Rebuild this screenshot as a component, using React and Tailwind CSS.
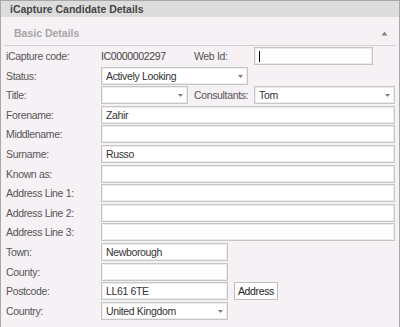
import React from 'react';

const Arrow = () => (
    <svg width="5" height="3" viewBox="0 0 5 3" className="absolute right-[4px] top-[7px]">
        <path d="M0 0H5L2.5 3Z" fill="#7d7d7d" />
    </svg>
);

const Field = ({ width = 'flex-1', value, dropdown, children }) => (
    <div className={`relative h-[18px] shrink-0 bg-white border border-[#c6c6c6] shadow-[inset_0_0_0_1px_#ececec] pl-[4px] leading-[16px] text-[#333] whitespace-nowrap ${width}`}>
        {value}
        {children}
        {dropdown && <Arrow />}
    </div>
);

const Label = ({ children, width = 'w-[95px]' }) => (
    <div className={`shrink-0 text-[#555] ${width}`}>{children}</div>
);

const rows = [
    { label: 'Middlename:' },
    { label: 'Surname:', value: 'Russo' },
    { label: 'Known as:' },
    { label: 'Address Line 1:' },
    { label: 'Address Line 2:' },
    { label: 'Address Line 3:' },
];

const App = () => {
    return (
        <div className="w-[400px] h-[327px] overflow-hidden bg-[#f5f1f5] border border-b-0 border-[#a8a8a8] font-[Liberation_Sans,Arial,sans-serif] text-[10.5px] tracking-[-0.35px]">
            {/* Title bar */}
            <div className="h-[16px] bg-[#dcdcdc] pl-[9px] font-bold tracking-normal leading-[16px] text-[#464646]">
                iCapture Candidate Details
            </div>

            {/* Group header */}
            <div className="mx-[3px] h-[29px] border-b border-[#d4d0d4] flex items-start justify-between pt-[9px] pl-[10px] pr-[8px]">
                <span className="font-bold tracking-normal text-[#a6a6a6] leading-[14px]">Basic Details</span>
                <svg width="7" height="5" viewBox="0 0 7 5" className="mt-[5px]">
                    <path d="M0.5 4.5H6.5L3.5 0.5Z" fill="#858585" />
                </svg>
            </div>

            {/* Form */}
            <div className="pl-[5px] pr-[4px] pt-[1px] flex flex-col gap-[1.6px] leading-[18px]">
                <div className="flex items-center h-[18px]">
                    <Label>iCapture code:</Label>
                    <div className="w-[93px] shrink-0 text-[#444]">IC0000002297</div>
                    <Label width="w-[60px]">Web Id:</Label>
                    <Field width="w-[119px]">
                        <span className="absolute left-[4px] top-[3px] w-px h-[11px] bg-black" />
                    </Field>
                </div>
                <div className="flex items-center h-[18px]">
                    <Label>Status:</Label>
                    <Field width="w-[147px]" value="Actively Looking" dropdown />
                </div>
                <div className="flex items-center h-[18px]">
                    <Label>Title:</Label>
                    <Field width="w-[87px]" dropdown />
                    <div className="w-[6px] shrink-0" />
                    <Label width="w-[60px]">Consultants:</Label>
                    <Field value="Tom" dropdown />
                </div>
                <div className="flex items-center h-[18px]">
                    <Label>Forename:</Label>
                    <Field value="Zahir" />
                </div>
                {rows.map((r) => (
                    <div key={r.label} className="flex items-center h-[18px]">
                        <Label>{r.label}</Label>
                        <Field value={r.value} />
                    </div>
                ))}
                <div className="flex items-center h-[18px]">
                    <Label>Town:</Label>
                    <Field width="w-[127px]" value="Newborough" />
                </div>
                <div className="flex items-center h-[18px]">
                    <Label>County:</Label>
                    <Field width="w-[127px]" />
                </div>
                <div className="flex items-center h-[18px]">
                    <Label>Postcode:</Label>
                    <Field width="w-[127px]" value="LL61 6TE" />
                    <button className="ml-[6px] h-[18px] w-[44px] bg-white border border-[#c0c0c0] text-[#222] leading-[16px] text-center">
                        Address
                    </button>
                </div>
                <div className="flex items-center h-[18px]">
                    <Label>Country:</Label>
                    <Field width="w-[127px]" value="United Kingdom" dropdown />
                </div>
            </div>
        </div>
    );
};

export default App;
